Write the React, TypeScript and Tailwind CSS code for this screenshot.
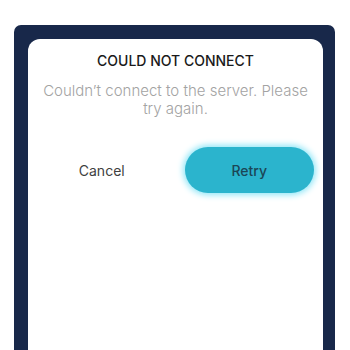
export default function App() {
  return (
    <main
      className="w-[350px] h-[350px] bg-white overflow-hidden pt-[25px] pl-[14px] pr-[15px]"
      style={{ fontFamily: 'Inter, "Noto Sans", sans-serif' }}
    >
      {/* Navy backdrop */}
      <div className="h-full bg-[#18284a] rounded-t-[7px] pt-[14px] pl-[14px] pr-[12px]">
        {/* Dialog card */}
        <div className="h-full bg-white rounded-t-[12px] flex flex-col items-center pt-[13px]">
          <h2 className="text-[14px] leading-[18px] font-medium text-[#1a1a1a]">
            COULD NOT CONNECT
          </h2>
          <p className="mt-[12px] px-[14px] text-center text-[15px] leading-[18px] text-[#a3a3a3] font-light">
            Couldn’t connect to the server. Please try again.
          </p>
          <div className="mt-[29px] w-full grid grid-cols-2 items-center">
            <button className="text-[14px] text-[#3f3f3f] font-normal">
              Cancel
            </button>
            <div className="flex justify-center">
              <button className="w-[129px] h-[46px] rounded-full bg-[#2bb4cd] text-[14px] text-[#1b4656] font-medium shadow-[0_0_6px_2px_#8fe6f7]">
                Retry
              </button>
            </div>
          </div>
        </div>
      </div>
    </main>
  );
}
